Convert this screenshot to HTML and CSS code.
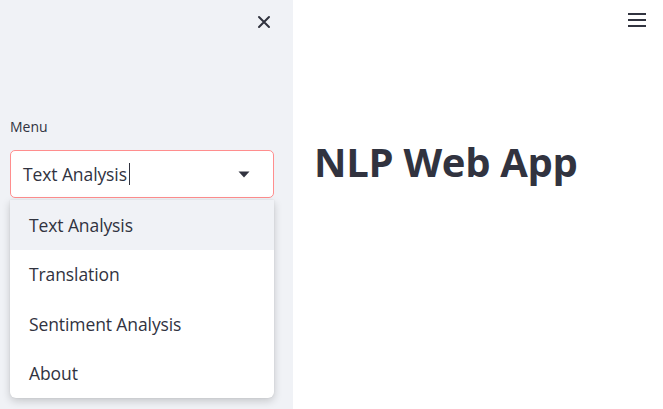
FILE: index.html
```html
<!DOCTYPE html>
<html>
<head>
<meta charset="utf-8">
<link rel="stylesheet" href="styles.css">
</head>
<body>
<div class="app">
  <aside class="sidebar">
    <div class="side-top">
      <button class="close" aria-label="Close">
        <svg width="14" height="14" viewBox="0 0 14 14"><path d="M2 2 L12 12 M12 2 L2 12" stroke="#31333f" stroke-width="2" stroke-linecap="round"/></svg>
      </button>
    </div>
    <label class="label">Menu</label>
    <div class="select">
      <span class="value">Text Analysis</span><span class="caret"></span>
      <svg class="arrow" width="12" height="7" viewBox="0 0 12 7"><path d="M0.5 0.5 H11.5 L6 6.5 Z" fill="#31333f"/></svg>
    </div>
    <ul class="options">
      <li class="option active">Text Analysis</li>
      <li class="option">Translation</li>
      <li class="option">Sentiment Analysis</li>
      <li class="option">About</li>
    </ul>
  </aside>
  <main class="main">
    <div class="main-top">
      <svg class="burger" width="20" height="16" viewBox="0 0 20 16"><path d="M1 2 H19 M1 8 H19 M1 14 H19" stroke="#31333f" stroke-width="2"/></svg>
    </div>
    <h1 class="title">NLP Web App</h1>
  </main>
</div>
</body>
</html>
```
FILE: styles.css
```css
* { box-sizing: border-box; }
html, body { margin: 0; padding: 0; height: 100%; }
body { font-family: "Open Sans", Lato, sans-serif; color: #31333f; background: #fff; }
.app { display: flex; height: 409px; overflow: hidden; }
.sidebar { width: 293px; flex: none; background: #f0f2f6; padding: 0 19px 0 10px; display: flex; flex-direction: column; }
.side-top { height: 113px; display: flex; justify-content: flex-end; align-items: flex-start; padding-top: 15px; }
.close { background: none; border: 0; padding: 0; width: 14px; height: 14px; margin-right: 3px; display: block; }
.close svg { display: block; }
.label { font-size: 14px; line-height: 20px; margin: 4px 0 0 0; padding-bottom: 13px; color: #31333f; }
.select { height: 48px; background: #fff; border: 1px solid #ff8e8e; border-radius: 5px; display: flex; align-items: center; padding: 0 12px; font-size: 17.5px; }
.value { letter-spacing: -0.1px; }
.caret { width: 1px; height: 22px; background: #31333f; margin-left: 2px; }
.arrow { margin-left: auto; margin-right: 11px; }
.options { list-style: none; margin: 2px 0 0 0; padding: 0; background: #fff; border-radius: 0 0 6px 6px; box-shadow: 0 3px 8px rgba(0,0,0,0.18), 0 0 2px rgba(0,0,0,0.08); overflow: hidden; }
.option { height: 49.5px; display: flex; align-items: center; padding-left: 19px; font-size: 17.5px; letter-spacing: -0.1px; }
.option.active { background: #f0f2f6; }
.main { flex: 1; position: relative; padding-left: 21px; }
.main-top { height: 138px; display: flex; justify-content: flex-end; padding: 12px 16px 0 0; }
.burger { display: block; }
.title { margin: 0; font-size: 40px; font-weight: 700; line-height: 48px; letter-spacing: -0.3px; color: #31333f; }
```
